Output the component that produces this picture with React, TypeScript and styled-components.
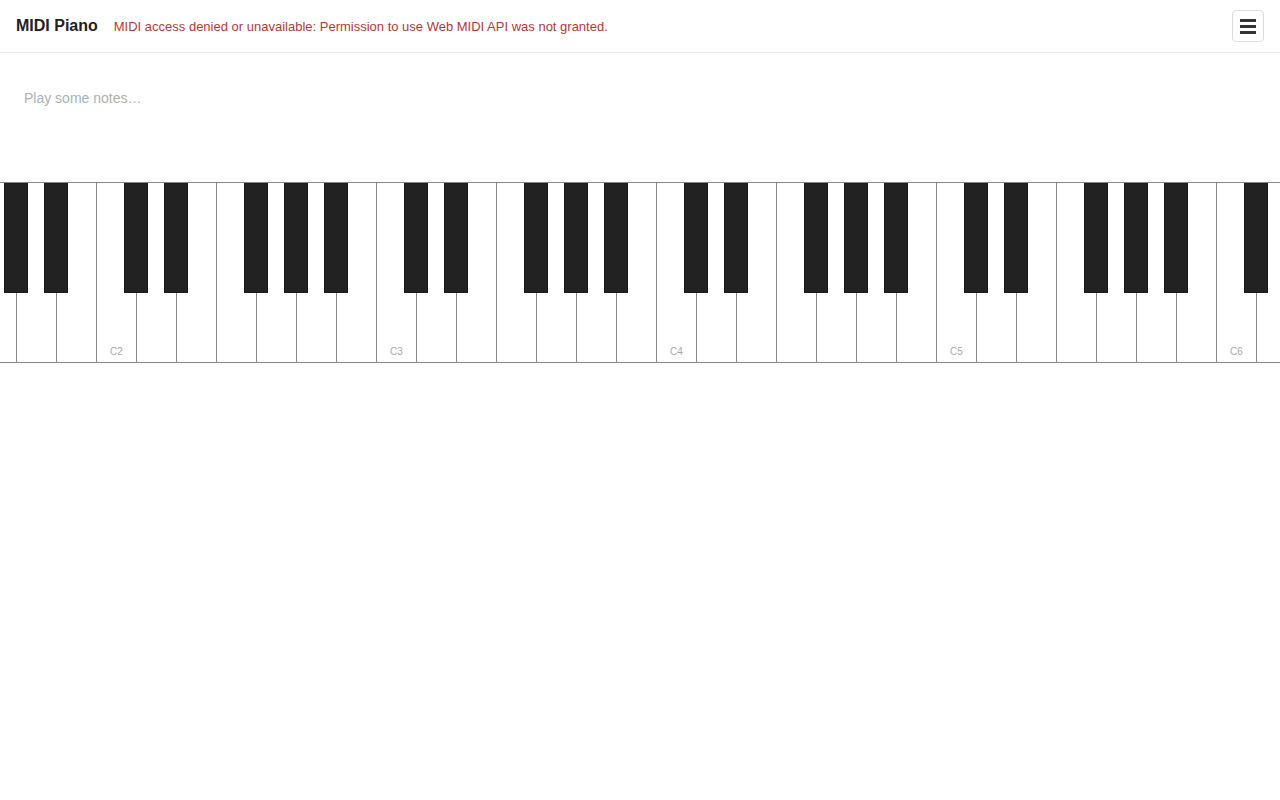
import { createGlobalStyle } from 'styled-components'
import styled from 'styled-components'

const GlobalStyle = createGlobalStyle`
	html, body {
		margin: 0;
		padding: 0;
		background: #fff;
		font-family: 'Liberation Sans', Arial, sans-serif;
		color: #222;
	}
`

const Header = styled.header`
	display: flex;
	align-items: center;
	height: 52px;
	padding: 0 16px;
	border-bottom: 1px solid #e8e8e8;
`

const Title = styled.h1`
	margin: 0;
	font-size: 16px;
	font-weight: bold;
	color: #222;
`

const Status = styled.span`
	margin-left: 16px;
	font-size: 13px;
	color: #b03a3a;
`

const MenuButton = styled.button`
	margin-left: auto;
	width: 32px;
	height: 32px;
	display: flex;
	flex-direction: column;
	align-items: center;
	justify-content: center;
	gap: 3px;
	padding: 0;
	background: #fff;
	border: 1px solid #ddd;
	border-radius: 4px;
	cursor: pointer;
`

const Bar = styled.span`
	display: block;
	width: 16px;
	height: 3px;
	background: #333;
`

const Notes = styled.div`
	padding: 35px 24px 0;
	height: 94px;
	font-size: 14px;
	line-height: 20px;
	color: #b0b0b0;
`

const Keyboard = styled.div`
	overflow: hidden;
	border-top: 1px solid #888;
	border-bottom: 1px solid #888;
`

const Keys = styled.div`
	position: relative;
	display: flex;
	margin-left: -24px;
	height: 179px;
`

const WhiteKey = styled.div`
	position: relative;
	flex: 0 0 40px;
	box-sizing: border-box;
	border-left: 1px solid #888;
	background: #fff;
	display: flex;
	align-items: flex-end;
	justify-content: center;
`

const KeyLabel = styled.span`
	margin-bottom: 5px;
	font-size: 10px;
	color: #aaa;
`

const BlackKey = styled.div<{ $left: number }>`
	position: absolute;
	top: 0;
	left: ${(p) => p.$left}px;
	width: 24px;
	height: 110px;
	box-sizing: border-box;
	background: #222;
	border: 1px solid #1a1a1a;
	z-index: 1;
`

const NAMES = ['C', 'D', 'E', 'F', 'G', 'A', 'B']
const HAS_SHARP = new Set(['C', 'D', 'F', 'G', 'A'])

type White = { name: string; octave: number }

const buildWhites = (): White[] => {
	const keys: White[] = []
	// G1 .. D6
	let idx = 4
	let octave = 1
	while (!(octave === 6 && idx === 2)) {
		keys.push({ name: NAMES[idx], octave })
		idx++
		if (idx === 7) {
			idx = 0
			octave++
		}
	}
	keys.push({ name: 'D', octave: 6 })
	return keys
}

const whites = buildWhites()

export default function App() {
	return (
		<>
			<GlobalStyle />
			<Header>
				<Title>MIDI Piano</Title>
				<Status>MIDI access denied or unavailable: Permission to use Web MIDI API was not granted.</Status>
				<MenuButton aria-label="Menu">
					<Bar />
					<Bar />
					<Bar />
				</MenuButton>
			</Header>
			<Notes>Play some notes…</Notes>
			<Keyboard>
				<Keys>
					{whites.map((k) => (
						<WhiteKey key={`${k.name}${k.octave}`}>
							{k.name === 'C' && <KeyLabel>C{k.octave}</KeyLabel>}
						</WhiteKey>
					))}
					{whites.map((k, i) =>
						HAS_SHARP.has(k.name) ? <BlackKey key={`${k.name}#${k.octave}`} $left={(i + 1) * 40 - 12} /> : null
					)}
				</Keys>
			</Keyboard>
		</>
	)
}
